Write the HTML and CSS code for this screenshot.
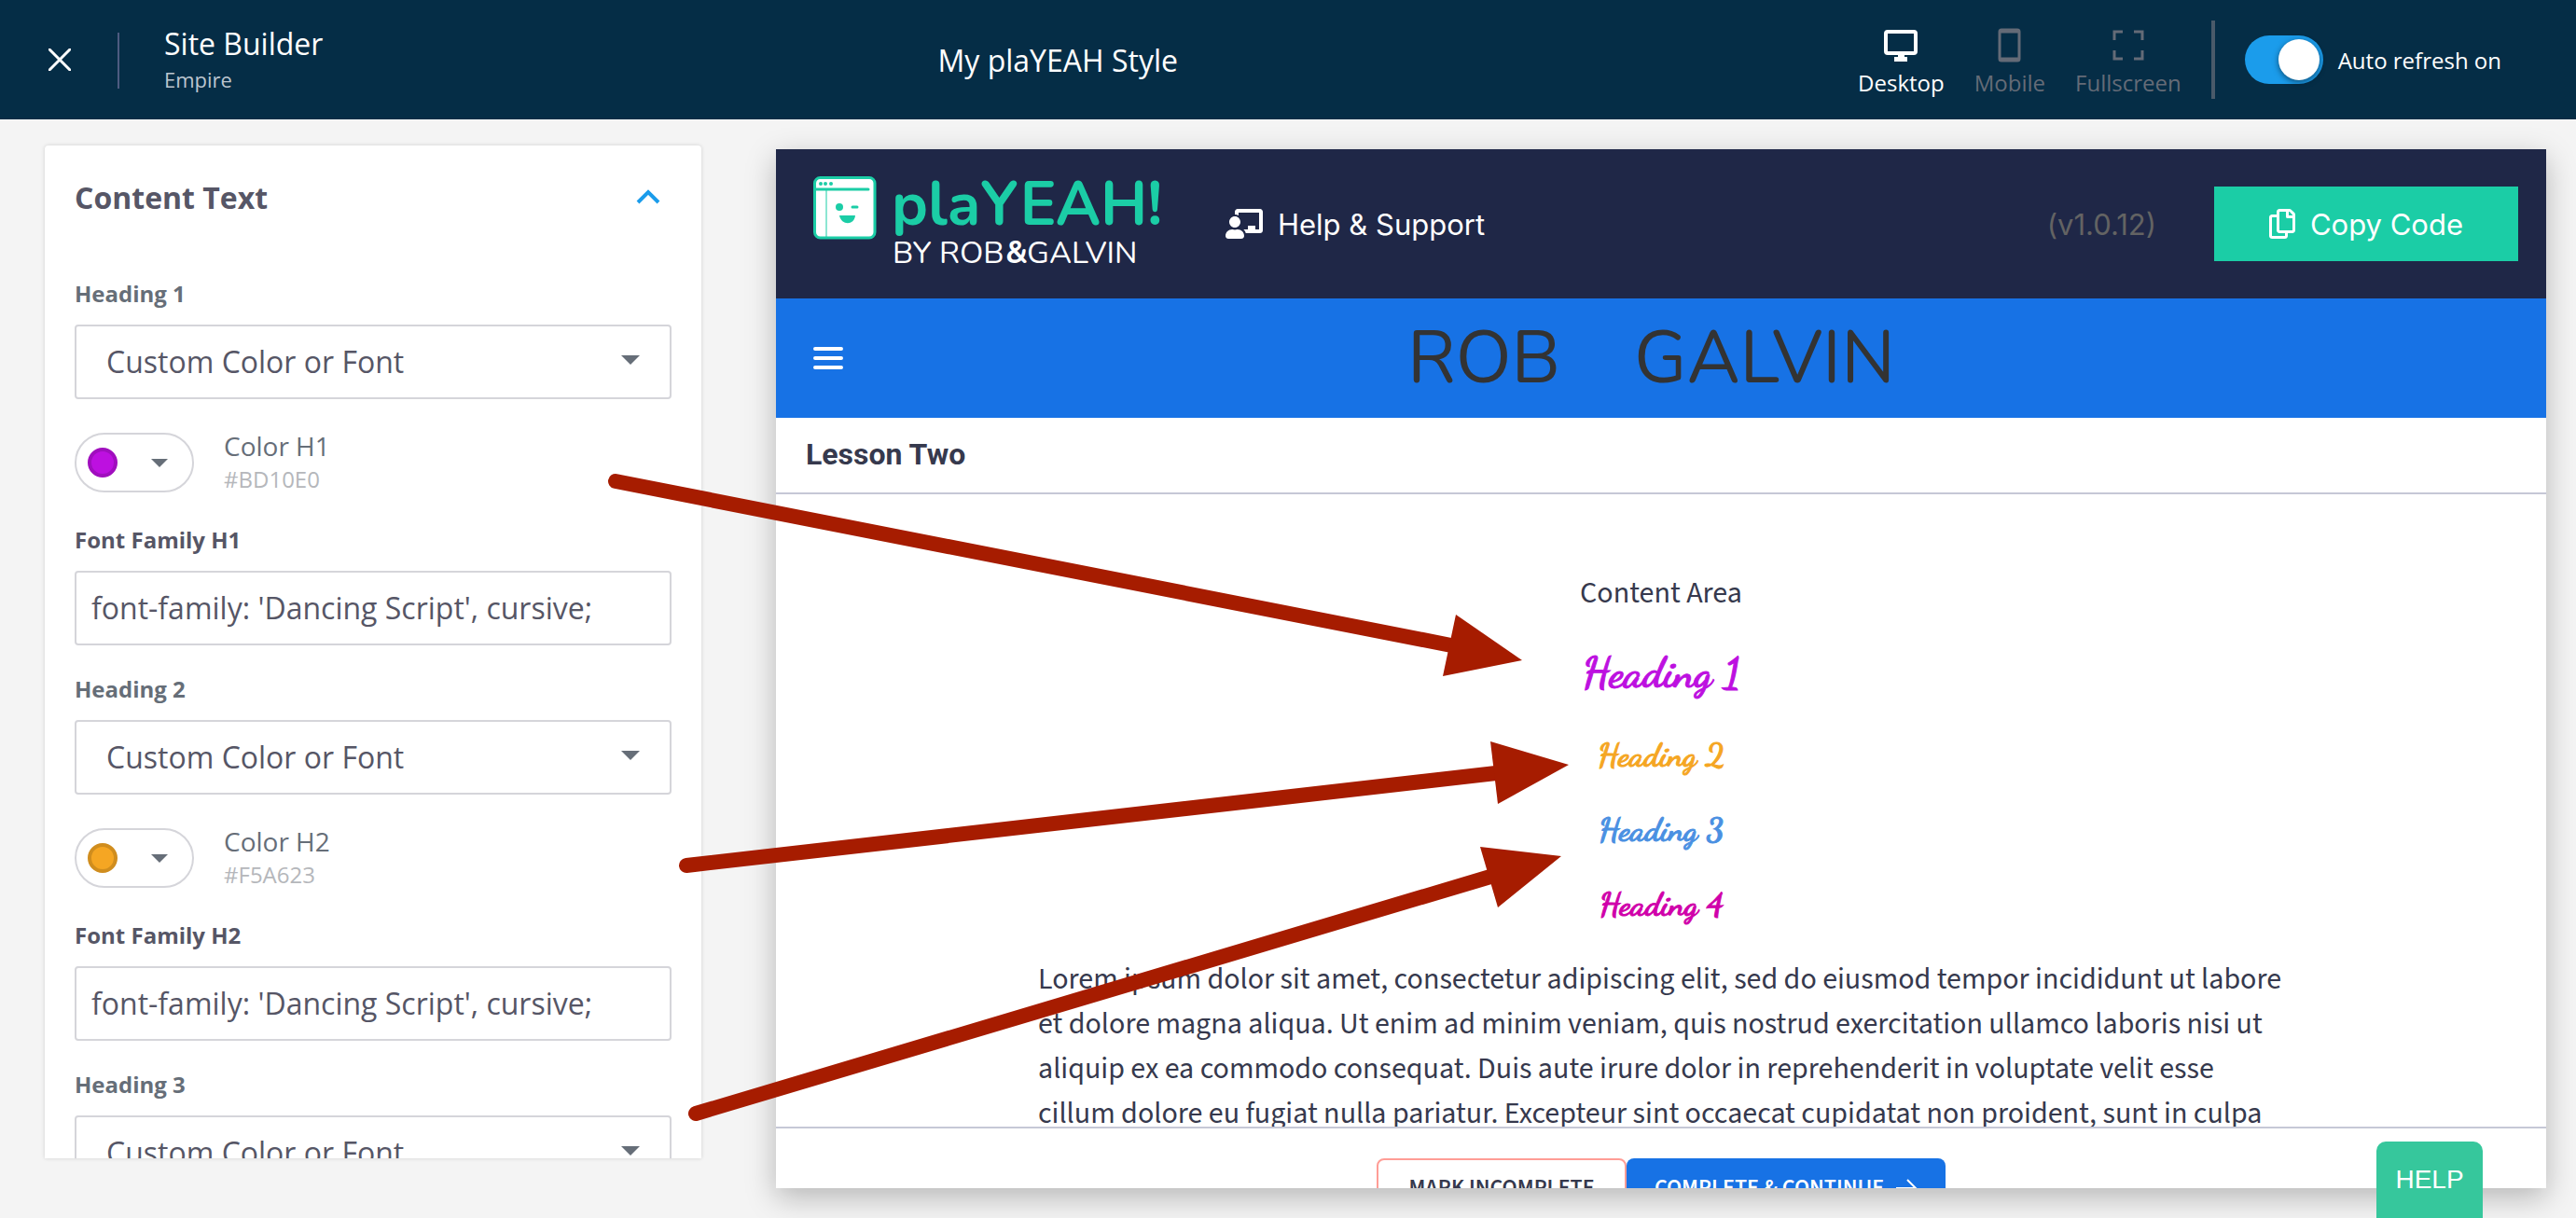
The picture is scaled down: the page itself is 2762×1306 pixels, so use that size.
FILE: index.html
```html
<!DOCTYPE html>
<html lang="en">
<head>
<meta charset="utf-8">
<title>Site Builder</title>
<link rel="stylesheet" href="styles.css">
</head>
<body>
<header class="topbar">
  <div class="topbar-left">
    <button class="close" aria-label="Close"><svg viewBox="0 0 24 24" width="24" height="24"><path d="M1 1 23 23M23 1 1 23" stroke="#fff" stroke-width="3" stroke-linecap="round"/></svg></button>
    <div class="titles">
      <strong class="title">Site Builder</strong>
      <span class="subtitle">Empire</span>
    </div>
  </div>
  <h1 class="site-name">My plaYEAH Style</h1>
  <div class="topbar-right">
    <button class="device active"><svg viewBox="0 0 40 40" width="40" height="40"><rect x="4" y="5" width="32" height="23" rx="2" fill="none" stroke="currentColor" stroke-width="4"/><path fill="currentColor" d="M17 28h7v4h3v5H13v-5h4z"/></svg>Desktop</button>
    <button class="device"><svg viewBox="0 0 40 40" width="40" height="40"><rect x="9" y="3" width="21" height="33" rx="2" fill="none" stroke="currentColor" stroke-width="3"/><path d="M9 5h21M9 34h21" stroke="currentColor" stroke-width="3"/></svg>Mobile</button>
    <button class="device"><svg viewBox="0 0 40 40" width="40" height="40"><path d="M5 14V5h9M26 5h9v9M35 25v9h-9M14 34H5v-9" fill="none" stroke="currentColor" stroke-width="3"/></svg>Fullscreen</button>
    <div class="refresh">
      <input type="checkbox" class="switch" id="auto" checked>
      <label for="auto">Auto refresh on</label>
    </div>
  </div>
</header>

<main class="workspace">
  <aside class="panel">
    <div class="panel-head">
      <h2>Content Text</h2>
      <button class="collapse" aria-label="Collapse"><svg viewBox="0 0 26 16" width="26" height="16"><path d="M2 14 13 3 24 14" fill="none" stroke="#1b9ceb" stroke-width="4"/></svg></button>
    </div>
    <form class="fields">
      <label class="label" for="h1s">Heading 1</label>
      <select class="box" id="h1s"><option>Custom Color or Font</option></select>
      <div class="color">
        <button type="button" class="picker" aria-label="Pick color H1"><span class="dot purple"></span><span class="caret"></span></button>
        <div class="color-text"><span class="color-name">Color H1</span><span class="hex">#BD10E0</span></div>
      </div>
      <label class="label dark" for="h1f">Font Family H1</label>
      <input class="box" id="h1f" type="text" value="font-family: 'Dancing Script', cursive;">
      <label class="label next" for="h2s">Heading 2</label>
      <select class="box" id="h2s"><option>Custom Color or Font</option></select>
      <div class="color">
        <button type="button" class="picker" aria-label="Pick color H2"><span class="dot orange"></span><span class="caret"></span></button>
        <div class="color-text"><span class="color-name">Color H2</span><span class="hex">#F5A623</span></div>
      </div>
      <label class="label dark" for="h2f">Font Family H2</label>
      <input class="box" id="h2f" type="text" value="font-family: 'Dancing Script', cursive;">
      <label class="label next" for="h3s">Heading 3</label>
      <select class="box" id="h3s"><option>Custom Color or Font</option></select>
    </form>
  </aside>

  <section class="preview">
    <div class="brandbar">
      <svg class="logo" viewBox="0 0 380 110" width="380" height="110" role="img" aria-label="plaYEAH! by Rob &amp; Galvin">
        <rect x="1.500" y="5.500" width="64.500" height="64.500" rx="6" fill="#fff" stroke="#1bcda6" stroke-width="3"/>
        <path d="M2 18H59" stroke="#1bcda6" stroke-width="3" stroke-linecap="round"/>
        <path d="M14 19V69" stroke="#1bcda6" stroke-width="1"/>
        <g fill="#1bcda6"><circle cx="8" cy="12" r="2"/><circle cx="13" cy="12" r="2"/><circle cx="19" cy="12" r="2"/><circle cx="28" cy="37" r="4"/><path d="M28 46H45C44 57 30 57 28 46z"/></g>
        <path d="M42 37h5" stroke="#1bcda6" stroke-width="3" stroke-linecap="round"/>
        <text class="logo-name" x="84" y="56">plaYEAH!</text>
        <text class="logo-by" x="85" y="97">BY ROB<tspan class="logo-amp" x="206">&amp;</tspan><tspan x="229">GALVIN</tspan></text>
      </svg>
      <a class="support" href="#"><svg viewBox="0 0 640 512" width="40" height="32"><path fill="currentColor" d="M208 352c-2.390 0-4.780.35-7.060 1.090C187.980 357.300 174.350 360 160 360s-27.980-2.700-40.950-6.910C116.780 352.350 114.390 352 112 352 49.940 352-.33 402.480 0 464.620.14 490.880 21.730 512 48 512h224c26.270 0 47.860-21.120 48-47.380C320.330 402.480 270.060 352 208 352zM160 320c53.020 0 96-42.980 96-96s-42.980-96-96-96-96 42.980-96 96 42.980 96 96 96zM592 0H208c-26.470 0-48 22.250-48 49.590V96c23.420 0 45.100 6.780 64 17.800V64h352v288h-64v-64H384v64h-76.240c19.100 16.690 33.120 38.730 39.690 64H592c26.470 0 48-22.250 48-49.590V49.590C640 22.250 618.470 0 592 0z"/></svg>Help &amp; Support</a>
      <span class="version">(v1.0.12)</span>
      <button class="copy"><svg viewBox="0 0 448 512" width="28" height="32"><path fill="currentColor" d="M433.941 65.941l-51.882-51.882A48 48 0 0 0 348.118 0H176c-26.510 0-48 21.490-48 48v48H48c-26.510 0-48 21.490-48 48v320c0 26.510 21.490 48 48 48h224c26.510 0 48-21.490 48-48v-48h80c26.510 0 48-21.490 48-48V99.882a48 48 0 0 0-14.059-33.941zM266 464H54a6 6 0 0 1-6-6V150a6 6 0 0 1 6-6h74v224c0 26.510 21.490 48 48 48h96v42a6 6 0 0 1-6 6zm128-96H182a6 6 0 0 1-6-6V54a6 6 0 0 1 6-6h106v88c0 13.255 10.745 24 24 24h88v202a6 6 0 0 1-6 6zm6-256h-64V48h9.632c1.591 0 3.117.632 4.243 1.757l48.368 48.368a6 6 0 0 1 1.757 4.243V112z"/></svg>Copy Code</button>
    </div>
    <nav class="course-nav">
      <button class="menu" aria-label="Menu"><svg viewBox="0 0 32 24" width="32" height="24"><path d="M2 2H30M2 12H30M2 22H30" stroke="#fff" stroke-width="4" stroke-linecap="round"/></svg></button>
      <svg class="wordmark" viewBox="0 0 544 90" width="544" height="90"><text x="0" y="71">ROB</text><text x="243" y="71">GALVIN</text></svg>
    </nav>
    <h2 class="lesson">Lesson Two</h2>
    <article class="content">
      <p class="area">Content Area</p>
      <h1 class="script one">Heading 1</h1>
      <h2 class="script two">Heading 2</h2>
      <h3 class="script three">Heading 3</h3>
      <h4 class="script four">Heading 4</h4>
      <p class="lorem">Lorem ipsum dolor sit amet, consectetur adipiscing elit, sed do eiusmod tempor incididunt ut labore et dolore magna aliqua. Ut enim ad minim veniam, quis nostrud exercitation ullamco laboris nisi ut aliquip ex ea commodo consequat. Duis aute irure dolor in reprehenderit in voluptate velit esse cillum dolore eu fugiat nulla pariatur. Excepteur sint occaecat cupidatat non proident, sunt in culpa</p>
    </article>
    <footer class="actions">
      <button class="action incomplete">MARK INCOMPLETE</button>
      <button class="action complete">COMPLETE &amp; CONTINUE<svg viewBox="0 0 24 24" width="24" height="24"><path d="M1 12H22M13 3 22 12 13 21" fill="none" stroke="#fff" stroke-width="2"/></svg></button>
    </footer>
  </section>
</main>

<button class="help">HELP</button>
<svg class="arrows" viewBox="0 0 2762 1306" aria-hidden="true">
  <g stroke="#a61c00" stroke-width="16" stroke-linecap="round"><path d="M660 516 1556 692"/><path d="M736 928 1604 829"/><path d="M746 1194 1598 940"/></g>
  <g fill="#a61c00"><path d="M1561 659 1632 708 1547 725z"/><path d="M1598 795 1682 820 1606 862z"/><path d="M1587 908 1674 918 1606 973z"/></g>
</svg>
</body>
</html>
```
FILE: styles.css
```css
* { box-sizing: border-box; }
html { height: 100%; }
body {
  margin: 0;
  height: 100%;
  display: flex;
  flex-direction: column;
  overflow: hidden;
  background: #f4f4f4;
  font-family: "Open Sans", sans-serif;
  color: #565666;
}
button { font: inherit; color: inherit; border: 0; background: none; padding: 0; }
h1, h2, h3, h4, p { margin: 0; }
svg { display: block; }

/* Top bar */
.topbar {
  flex: none;
  height: 128px;
  padding: 0 80px 0 52px;
  display: grid;
  grid-template-columns: auto 1fr auto;
  align-items: center;
  background: #052d46;
  color: #fff;
}
.topbar-left { display: flex; align-items: center; gap: 50px; }
.titles {
  display: flex;
  flex-direction: column;
  gap: 2px;
  position: relative;
  padding-left: 50px;
}
.titles::before {
  content: "";
  position: absolute;
  left: 0;
  top: 8px;
  width: 2px;
  height: 60px;
  background: #4d5b80;
}
.title { font-size: 32px; line-height: 40px; font-weight: 400; }
.subtitle { font-size: 22px; line-height: 32px; color: #bcc5cf; }
.site-name { font-size: 32px; font-weight: 400; text-align: center; padding-right: 70px; }
.topbar-right { display: flex; align-items: center; justify-content: flex-end; gap: 32px; }
.device {
  display: flex;
  flex-direction: column;
  align-items: center;
  gap: 4px;
  padding-top: 6px;
  font-size: 24px;
  line-height: 32px;
  color: #646b77;
}
.device.active { color: #fff; }
.refresh {
  display: flex;
  align-items: center;
  gap: 16px;
  height: 84px;
  padding-left: 32px;
  border-left: 4px solid #4a5a6a;
  font-size: 24px;
}
.switch {
  appearance: none;
  margin: 0;
  width: 84px;
  height: 52px;
  padding: 4px;
  border-radius: 26px;
  background: #1b9ceb;
}
.switch::before {
  content: "";
  display: block;
  width: 44px;
  height: 44px;
  margin-left: 32px;
  border-radius: 50%;
  background: #fff;
  box-shadow: 0 2px 6px rgba(0, 0, 0, .5);
}

/* Workspace */
.workspace {
  flex: 1;
  min-height: 0;
  display: flex;
  gap: 80px;
  padding: 28px 32px 32px 48px;
}
.panel {
  width: 704px;
  flex: none;
  margin-bottom: 32px;
  overflow: hidden;
  background: #fff;
  border-radius: 4px 4px 0 0;
  box-shadow: 0 0 4px rgba(0, 0, 0, .15);
}
.panel-head {
  display: flex;
  align-items: center;
  justify-content: space-between;
  height: 112px;
  padding: 0 44px 2px 32px;
}
.panel-head h2 { font-size: 32px; font-weight: 700; }
.fields { display: flex; flex-direction: column; padding: 32px 32px 0; }
.label {
  font-size: 24px;
  line-height: 30px;
  margin-bottom: 18px;
  font-weight: 700;
  color: #666e78;
}
.label.dark { color: #565666; }
.label.next { margin-top: 32px; }
.box {
  flex: none;
  width: 100%;
  height: 80px;
  border: 2px solid #d5d5da;
  border-radius: 4px;
  padding: 0 16px 2px;
  background: #fff;
  color: #565666;
  font-family: inherit;
  font-size: 32px;
}
select.box {
  appearance: none;
  padding-left: 32px;
  background: #fff url("data:image/svg+xml,%3Csvg xmlns='http://www.w3.org/2000/svg' width='20' height='14'%3E%3Cpath d='M0 0H20L10 10z' fill='%23666e78'/%3E%3C/svg%3E") no-repeat right 32px center;
}
.color { display: flex; align-items: center; gap: 32px; margin: 32px 0; height: 72px; }
.picker {
  display: flex;
  align-items: center;
  justify-content: space-between;
  width: 128px;
  height: 64px;
  padding: 0 26px 0 12px;
  border: 2px solid #d5d5da;
  border-radius: 32px;
}
.dot { width: 32px; height: 32px; border-radius: 50%; border: 4px solid; }
.purple { background: #bd10e0; border-color: #a00ebe; }
.orange { background: #f5a623; border-color: #d08d1e; }
.caret { border: 9px solid transparent; border-top: 9px solid #666e78; border-bottom: 0; }
.color-text { display: flex; flex-direction: column; }
.color-name { font-size: 28px; line-height: 36px; color: #666e78; }
.hex { font-size: 24px; line-height: 36px; color: #b5b7bb; }

/* Preview */
.preview {
  flex: 1;
  min-width: 0;
  margin-top: 4px;
  display: flex;
  flex-direction: column;
  overflow: hidden;
  background: #fff;
  color: #36394d;
  box-shadow: 0 10px 30px rgba(0, 0, 0, .25);
}
.brandbar {
  flex: none;
  display: flex;
  align-items: center;
  height: 160px;
  padding: 0 30px 0 40px;
  background: #1f2747;
  color: #fff;
  font-family: Inter, sans-serif;
  font-size: 31px;
}
.logo { margin-right: 62px; }
.logo-name { font: 700 65px Nunito, Lato, sans-serif; fill: #1bcda6; }
.logo-by { font: 400 33px Nunito, Lato, sans-serif; fill: #fff; }
.logo-amp { font-weight: 700; }
.support { display: flex; align-items: center; gap: 16px; color: #fff; text-decoration: none; }
.version { margin-left: auto; color: #636363; }
.copy {
  display: flex;
  align-items: center;
  justify-content: center;
  gap: 16px;
  width: 326px;
  height: 80px;
  margin-left: 62px;
  background: #1bcda6;
}
.course-nav {
  flex: none;
  display: grid;
  grid-template-columns: 1fr auto 1fr;
  align-items: center;
  height: 128px;
  padding: 0 40px;
  background: #1772e5;
}
.wordmark text { font: 400 78px Nunito, Lato, sans-serif; fill: #333; }
.lesson {
  flex: none;
  height: 82px;
  padding: 0 32px;
  border-bottom: 2px solid #c6c8d6;
  font: 700 32px/78px Roboto, sans-serif;
}
.content {
  flex: 1;
  min-height: 0;
  overflow: hidden;
  padding: 82px 280px 0;
  display: flex;
  flex-direction: column;
  align-items: center;
  font: 400 32px/48px "Source Sans Pro", "Source Sans 3", "Noto Sans CJK SC", sans-serif;
}
.area { margin-bottom: 30px; }
.script {
  font-family: "Dancing Script", cursive;
  font-weight: 700;
  font-size: 35px;
  line-height: 48px;
  margin-bottom: 32px;
  -webkit-text-stroke: 1px currentColor;
}
.one { font-size: 46px; line-height: 64px; color: #bd10e0; }
.two { color: #f5a623; }
.three { color: #4a90e2; }
.four { color: #d000aa; }
.lorem { flex: none; width: 1336px; }
.actions {
  flex: none;
  display: flex;
  justify-content: center;
  align-items: flex-start;
  height: 66px;
  padding-top: 32px;
  overflow: hidden;
  border-top: 2px solid #c6c8d6;
}
.action {
  flex: none;
  display: flex;
  align-items: center;
  justify-content: center;
  gap: 12px;
  height: 64px;
  border-radius: 8px;
  font: 600 24px/32px "Source Sans Pro", "Source Sans 3", "Noto Sans CJK SC", sans-serif;
}
.incomplete { width: 268px; border: 2px solid #ff9d96; }
.complete { width: 342px; background: #1772e5; color: #fff; }
.help {
  position: absolute;
  right: 100px;
  bottom: 0;
  width: 114px;
  height: 82px;
  border-radius: 10px 10px 0 0;
  background: #36c79c;
  color: #fff;
  font: 400 28px "Liberation Sans", sans-serif;
}
.arrows { position: absolute; inset: 0; width: 100%; height: 100%; pointer-events: none; }
```
